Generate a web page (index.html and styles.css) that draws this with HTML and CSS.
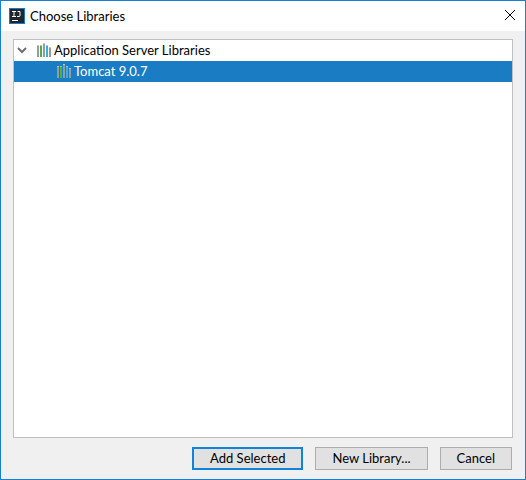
FILE: index.html
```html
<!DOCTYPE html>
<html lang="en">
<head>
<meta charset="utf-8">
<title>Choose Libraries</title>
<link rel="stylesheet" href="styles.css">
</head>
<body>
<svg class="defs" aria-hidden="true">
  <symbol id="library" viewBox="0 0 14 14">
    <path class="bar-gray" d="M0 2h2v12H0zM6 0h2v14H6zM12 4h2v10h-2z"/>
    <path class="bar-green" d="M3 2h2v12H3z"/>
    <path class="bar-blue" d="M9 2h2v12H9z"/>
    <path class="bar-cap" d="M0 2h2v1H0zM3 2h2v1H3zM6 0h2v1H6zM9 2h2v1H9zM12 4h2v1h-2z"/>
  </symbol>
</svg>
<main class="dialog">
  <header class="titlebar">
    <svg class="logo" viewBox="0 0 16 16" aria-hidden="true">
      <rect class="logo-edge" width="16" height="16"/>
      <rect class="logo-face" x="1" y="1" width="14" height="14"/>
      <path class="logo-mark" d="M3 3.500h4M5 3.500v5M3 8.500h4M8.500 3.500h2.500v4.500l-.5.500H8"/>
      <path class="logo-mark" d="M3 12.500h6"/>
    </svg>
    <h1 class="title">Choose Libraries</h1>
    <button class="close" type="button" aria-label="Close">
      <svg class="close-icon" viewBox="0 0 12 12" aria-hidden="true"><path d="M1 1l10 10M11 1L1 11"/></svg>
    </button>
  </header>
  <ul class="tree" role="tree">
    <li class="row" role="treeitem" aria-expanded="true">
      <svg class="chevron" viewBox="0 0 10 10" aria-hidden="true"><path d="M1 3l4 4 4-4"/></svg>
      <svg class="library" aria-hidden="true"><use href="#library"/></svg>
      <span class="label">Application Server Libraries</span>
    </li>
    <li class="row row-child selected" role="treeitem" aria-selected="true">
      <svg class="library" aria-hidden="true"><use href="#library"/></svg>
      <span class="label">Tomcat 9.0.7</span>
    </li>
  </ul>
  <footer class="actions">
    <button class="button primary" type="button">Add Selected</button>
    <button class="button" type="button">New Library...</button>
    <button class="button" type="button">Cancel</button>
  </footer>
</main>
</body>
</html>
```

FILE: styles.css
```css
* { box-sizing: border-box; }

body {
  margin: 0;
  font: 13px/20px Lato, "Noto Sans", sans-serif;
  color: #000;
}

.defs { display: none; }

.dialog {
  display: flex;
  flex-direction: column;
  min-height: 100vh;
  border: 1px solid #1880d4;
  background: #f0f0f0;
}

.titlebar {
  display: flex;
  align-items: center;
  height: 30px;
  padding: 0 9px 0 8px;
  background: #fff;
}

.logo { width: 16px; height: 16px; }
.logo-edge { fill: #1979d0; }
.logo-face { fill: #20262d; }
.logo-mark { fill: none; stroke: #fff; }

.title {
  flex: 1;
  margin: 0 0 0 5px;
  font-size: 13px;
  font-weight: 400;
}

.close {
  display: flex;
  padding: 0 0 2px;
  border: 0;
  background: none;
}

.close-icon {
  width: 12px;
  height: 12px;
  fill: none;
  stroke: #000;
}

.tree {
  flex: 1;
  margin: 8px 12px 0;
  padding: 0;
  border: 1px solid #c0c0c0;
  background: #fff;
  list-style: none;
}

.row {
  display: flex;
  align-items: center;
  gap: 3px;
  height: 21px;
  padding: 0 3px 1px;
}

.row-child { padding-left: 43px; }
.selected { background: #1a7dc4; color: #fff; }

.chevron {
  width: 10px;
  height: 10px;
  margin-right: 7px;
  fill: none;
  stroke: #6e6e6e;
  stroke-width: 2;
}

.library { width: 14px; height: 14px; }
.bar-gray { fill: #919da6; }
.bar-green { fill: #57ad3c; }
.bar-blue { fill: #3ab0dc; }
.bar-cap { fill: #fff; opacity: .4; }

.actions {
  display: flex;
  justify-content: flex-end;
  gap: 12px;
  padding: 9px 13px;
}

.button {
  height: 23px;
  padding: 0 16px 2px;
  border: 1px solid #adadad;
  background: #e1e1e1;
  color: #000;
  font: inherit;
  line-height: 18px;
}

.primary { border: 2px solid #0f84dc; }
```
